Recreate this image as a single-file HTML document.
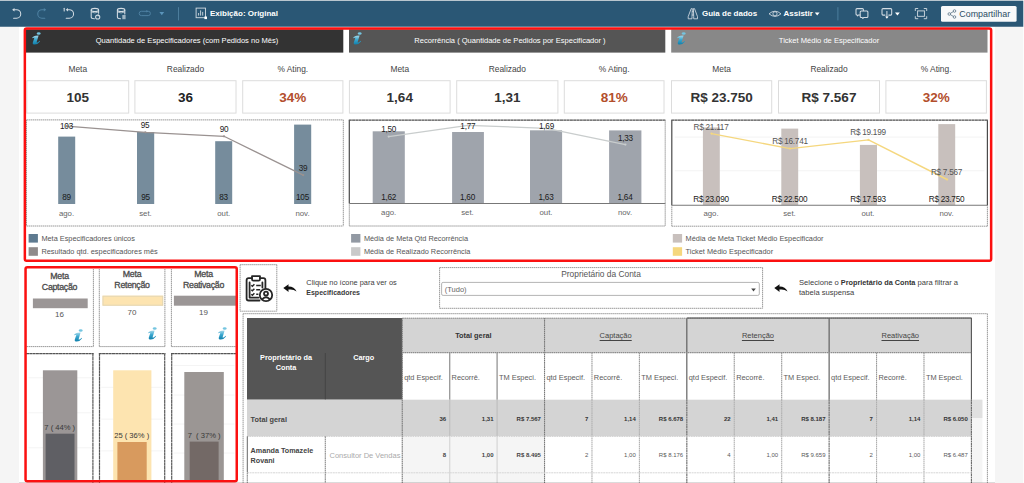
<!DOCTYPE html><html lang="pt-BR"><head><meta charset="utf-8"><title>Dashboard</title><style>
html,body{margin:0;padding:0;}
body{width:1024px;height:483px;overflow:hidden;background:#f5f5f5;position:relative;font-family:"Liberation Sans",sans-serif;}
div,svg{position:absolute;box-sizing:border-box;}
.t{position:absolute;z-index:5;}
</style></head><body>
<div style="left:19px;top:27px;width:976px;height:456px;background:#fff;"></div>
<svg style="left:0;top:0;z-index:4;" width="1024" height="28" viewBox="0 0 1024 28"><path d="M13.6 9.7 H16.5 A4.25 4.25 0 0 1 16.5 18.2 H13.6" stroke="#d3dce3" fill="none" stroke-width="1.05" stroke-linecap="round" stroke-linejoin="round"/><path d="M12.1 9.7 L14.5 8 V11.4 Z" fill="#d3dce3"/><path d="M44.4 9.7 H42 A4.25 4.25 0 0 0 42 18.2 H44.8" stroke="#4f82a3" fill="none" stroke-width="1.05" stroke-linecap="round" stroke-linejoin="round"/><path d="M46.2 9.7 L43.8 8 V11.4 Z" fill="#4f82a3"/><path d="M67.4 9.7 H69.3 A4.25 4.25 0 0 1 69.3 18.2 H66.2" stroke="#d3dce3" fill="none" stroke-width="1.05" stroke-linecap="round" stroke-linejoin="round"/><path d="M65.7 9.7 L68 8 V11.4 Z" fill="#d3dce3"/><path d="M64.2 8.3 V11" stroke="#d3dce3" fill="none" stroke-width="1.05" stroke-linecap="round" stroke-linejoin="round"/><path d="M91.2 10 V17 Q91.2 18.7 94.4 18.7 M98.6 10 V13.2" stroke="#d3dce3" fill="none" stroke-width="1.05" stroke-linecap="round" stroke-linejoin="round"/><ellipse cx="94.9" cy="9.9" rx="3.7" ry="1.5" stroke="#d3dce3" fill="none" stroke-width="1.05" stroke-linecap="round" stroke-linejoin="round"/><path d="M91.2 12 Q94.9 13.8 98.6 12" stroke="#d3dce3" fill="none" stroke-width="0.7"/><circle cx="97.7" cy="17" r="2.1" stroke="#d3dce3" fill="none" stroke-width="1.05" stroke-linecap="round" stroke-linejoin="round"/><circle cx="98.3" cy="15.4" r="0.9" fill="#d3dce3"/><path d="M117.4 10 V17 Q117.4 18.7 120.6 18.7 M124.8 10 V14" stroke="#d3dce3" fill="none" stroke-width="1.05" stroke-linecap="round" stroke-linejoin="round"/><ellipse cx="121.1" cy="9.9" rx="3.7" ry="1.5" stroke="#d3dce3" fill="none" stroke-width="1.05" stroke-linecap="round" stroke-linejoin="round"/><path d="M117.4 12 Q121.1 13.8 124.8 12" stroke="#d3dce3" fill="none" stroke-width="0.7"/><rect x="122.3" y="15" width="3.3" height="4.2" fill="#9db3c2"/><rect x="139.2" y="11.3" width="11.2" height="4.3" rx="2.15" stroke="#4f82a3" fill="none" stroke-width="0.95"/><path d="M146.3 10 L148.2 11.3 L146.3 12.6 Z" fill="#4f82a3"/><path d="M159.4 12 H164.2 L161.8 15.3 Z" fill="#5a94ba"/><path d="M178.5 7.2 V20.4 M837.9 7.2 V20.4" stroke="#4c7d9c" stroke-width="1"/><rect x="196.1" y="8.1" width="9.4" height="9.6" fill="none" stroke="#d3dce3" stroke-width="0.9"/><path d="M198.6 15.6 V13 M200.6 15.6 V10.4 M202.7 15.6 V11.9" stroke="#d3dce3" stroke-width="0.9"/><rect x="204.4" y="16.5" width="2.6" height="2.6" fill="#fff"/><path d="M691.2 8.6 L688.2 16.6 V18.8 H692 V16.6 L692.3 8.6 Z M694.5 8.6 L697.5 16.6 V18.8 H693.7 V16.6 L693.4 8.6 Z" stroke="#d3dce3" fill="none" stroke-width="0.85" stroke-linejoin="round"/><path d="M692.2 11.6 H693.6 M692 15 H693.7" stroke="#d3dce3" stroke-width="0.85"/><path d="M769 13.8 Q775 8.6 781 13.8 Q775 19 769 13.8 Z" stroke="#d3dce3" fill="none" stroke-width="0.85"/><circle cx="775" cy="13.8" r="2.1" stroke="#d3dce3" fill="none" stroke-width="0.85"/><path d="M814.8 12.4 H819.6 L817.2 15.6 Z" fill="#fff"/><path d="M860 14.9 H858.4 L857.6 15.9 L857 14.9 Q856 14.9 856 13.9 V9.6 Q856 8.6 857 8.6 H862.4 Q863.4 8.6 863.4 9.6 V10.6" stroke="#d3dce3" fill="none" stroke-width="1.05" stroke-linecap="round" stroke-linejoin="round"/><path d="M861.2 11 H866.9 Q867.9 11 867.9 12 V16.4 Q867.9 17.4 866.9 17.4 H863.8 L862.9 18.5 L862 17.4 H861.2 Q860.2 17.4 860.2 16.4 V12 Q860.2 11 861.2 11 Z" stroke="#d3dce3" fill="none" stroke-width="1.05" stroke-linecap="round" stroke-linejoin="round"/><path d="M885 15.1 H883 Q882 15.1 882 14.1 V9.6 Q882 8.6 883 8.6 H890.7 Q891.7 8.6 891.7 9.6 V14.1 Q891.7 15.1 890.7 15.1 H888.8" stroke="#d3dce3" fill="none" stroke-width="1.05" stroke-linecap="round" stroke-linejoin="round"/><path d="M886.9 11.6 V17" stroke="#d3dce3" fill="none" stroke-width="1.05" stroke-linecap="round" stroke-linejoin="round"/><path d="M885.2 16.4 H888.6 L886.9 18.8 Z" fill="#fff"/><path d="M895 12.4 H899.8 L897.4 15.6 Z" fill="#fff"/><rect x="917.6" y="10.9" width="6.8" height="5.4" stroke="#d3dce3" fill="none" stroke-width="0.9"/><path d="M915.3 11 V8.5 H918.2 M923.8 8.5 H926.7 V11 M926.7 16.2 V18.7 H923.8 M918.2 18.7 H915.3 V16.2" stroke="#d3dce3" fill="none" stroke-width="0.9"/><g stroke="#5a7386" stroke-width="0.8" fill="none"><circle cx="949.3" cy="14" r="1.3"/><circle cx="954.5" cy="11" r="1.3"/><circle cx="954.5" cy="17" r="1.3"/><path d="M950.4 13.3 L953.4 11.6 M950.4 14.7 L953.4 16.4"/></g></svg>
<div class="t" style="top:9.20px;font-size:8px;line-height:9.6px;color:#fff;font-weight:bold;white-space:nowrap;left:210px;text-align:left;">Exibição: Original</div>
<div class="t" style="top:9.20px;font-size:8px;line-height:9.6px;color:#fff;font-weight:bold;white-space:nowrap;left:702px;text-align:left;">Guia de dados</div>
<div class="t" style="top:9.20px;font-size:8px;line-height:9.6px;color:#fff;font-weight:bold;white-space:nowrap;left:783.5px;text-align:left;">Assistir</div>
<div class="t" style="top:8.66px;font-size:8.9px;line-height:10.68px;color:#2b4c63;font-weight:normal;white-space:nowrap;left:959.3px;text-align:left;">Compartilhar</div>
<svg style="left:32.4px;top:32.3px;z-index:4;" width="9.0" height="13.0" viewBox="0 0 9 13"><defs><linearGradient id="ig356" x1="0" y1="0" x2="0" y2="1"><stop offset="0" stop-color="#a3d8ea"/><stop offset="0.45" stop-color="#3aa7cf"/><stop offset="1" stop-color="#0f7fab"/></linearGradient></defs><ellipse cx="6.7" cy="1.6" rx="1.9" ry="1.25" fill="#74c5e0"/><path d="M3.6 3.7 L6.6 3.6 L4.7 9.9 Q4.5 10.8 5.3 10.6 Q6.6 10.1 7.8 8.8 L8 9.5 Q6 12.3 2.8 12.6 Q0.3 12.7 0.8 10.5 L2.4 5.8 L0.2 6.2 L0.3 5.4 Q2 4 3.6 3.7 Z" fill="url(#ig356)"/></svg>
<div class="t" style="top:35.77px;font-size:7.55px;line-height:9.06px;color:#fff;font-weight:normal;white-space:nowrap;left:-13px;width:400px;text-align:center;">Quantidade de Especificadores (com Pedidos no Mês)</div>
<svg style="left:353.2px;top:32.3px;z-index:4;" width="9.0" height="13.0" viewBox="0 0 9 13"><defs><linearGradient id="ig3564" x1="0" y1="0" x2="0" y2="1"><stop offset="0" stop-color="#a3d8ea"/><stop offset="0.45" stop-color="#3aa7cf"/><stop offset="1" stop-color="#0f7fab"/></linearGradient></defs><ellipse cx="6.7" cy="1.6" rx="1.9" ry="1.25" fill="#74c5e0"/><path d="M3.6 3.7 L6.6 3.6 L4.7 9.9 Q4.5 10.8 5.3 10.6 Q6.6 10.1 7.8 8.8 L8 9.5 Q6 12.3 2.8 12.6 Q0.3 12.7 0.8 10.5 L2.4 5.8 L0.2 6.2 L0.3 5.4 Q2 4 3.6 3.7 Z" fill="url(#ig3564)"/></svg>
<div class="t" style="top:35.77px;font-size:7.55px;line-height:9.06px;color:#fff;font-weight:normal;white-space:nowrap;left:310px;width:400px;text-align:center;">Recorrência ( Quantidade de Pedidos por Especificador )</div>
<svg style="left:677.2px;top:32.3px;z-index:4;" width="9.0" height="13.0" viewBox="0 0 9 13"><defs><linearGradient id="ig6804" x1="0" y1="0" x2="0" y2="1"><stop offset="0" stop-color="#a3d8ea"/><stop offset="0.45" stop-color="#3aa7cf"/><stop offset="1" stop-color="#0f7fab"/></linearGradient></defs><ellipse cx="6.7" cy="1.6" rx="1.9" ry="1.25" fill="#74c5e0"/><path d="M3.6 3.7 L6.6 3.6 L4.7 9.9 Q4.5 10.8 5.3 10.6 Q6.6 10.1 7.8 8.8 L8 9.5 Q6 12.3 2.8 12.6 Q0.3 12.7 0.8 10.5 L2.4 5.8 L0.2 6.2 L0.3 5.4 Q2 4 3.6 3.7 Z" fill="url(#ig6804)"/></svg>
<div class="t" style="top:35.77px;font-size:7.55px;line-height:9.06px;color:#fff;font-weight:normal;white-space:nowrap;left:629px;width:400px;text-align:center;">Ticket Médio de Especificador</div>
<div class="t" style="top:63.96px;font-size:8.4px;line-height:10.08px;color:#444;font-weight:normal;white-space:nowrap;left:-122.25px;width:400px;text-align:center;">Meta</div>
<div class="t" style="top:90.40px;font-size:13.5px;line-height:16.2px;color:#333;font-weight:bold;white-space:nowrap;left:-122.25px;width:400px;text-align:center;">105</div>
<div class="t" style="top:63.96px;font-size:8.4px;line-height:10.08px;color:#444;font-weight:normal;white-space:nowrap;left:-14.550000000000011px;width:400px;text-align:center;">Realizado</div>
<div class="t" style="top:90.40px;font-size:13.5px;line-height:16.2px;color:#222;font-weight:bold;white-space:nowrap;left:-14.550000000000011px;width:400px;text-align:center;">36</div>
<div class="t" style="top:63.96px;font-size:8.4px;line-height:10.08px;color:#444;font-weight:normal;white-space:nowrap;left:92.79999999999995px;width:400px;text-align:center;">% Ating.</div>
<div class="t" style="top:90.40px;font-size:13.5px;line-height:16.2px;color:#b34e2c;font-weight:bold;white-space:nowrap;left:92.79999999999995px;width:400px;text-align:center;">34%</div>
<div class="t" style="top:63.96px;font-size:8.4px;line-height:10.08px;color:#444;font-weight:normal;white-space:nowrap;left:199.75px;width:400px;text-align:center;">Meta</div>
<div class="t" style="top:90.40px;font-size:13.5px;line-height:16.2px;color:#333;font-weight:bold;white-space:nowrap;left:199.75px;width:400px;text-align:center;">1,64</div>
<div class="t" style="top:63.96px;font-size:8.4px;line-height:10.08px;color:#444;font-weight:normal;white-space:nowrap;left:307.29999999999995px;width:400px;text-align:center;">Realizado</div>
<div class="t" style="top:90.40px;font-size:13.5px;line-height:16.2px;color:#333;font-weight:bold;white-space:nowrap;left:307.29999999999995px;width:400px;text-align:center;">1,31</div>
<div class="t" style="top:63.96px;font-size:8.4px;line-height:10.08px;color:#444;font-weight:normal;white-space:nowrap;left:414.15px;width:400px;text-align:center;">% Ating.</div>
<div class="t" style="top:90.40px;font-size:13.5px;line-height:16.2px;color:#b34e2c;font-weight:bold;white-space:nowrap;left:414.15px;width:400px;text-align:center;">81%</div>
<div class="t" style="top:63.96px;font-size:8.4px;line-height:10.08px;color:#444;font-weight:normal;white-space:nowrap;left:521.6px;width:400px;text-align:center;">Meta</div>
<div class="t" style="top:90.40px;font-size:13.5px;line-height:16.2px;color:#333;font-weight:bold;white-space:nowrap;left:521.6px;width:400px;text-align:center;">R$ 23.750</div>
<div class="t" style="top:63.96px;font-size:8.4px;line-height:10.08px;color:#444;font-weight:normal;white-space:nowrap;left:629.0px;width:400px;text-align:center;">Realizado</div>
<div class="t" style="top:90.40px;font-size:13.5px;line-height:16.2px;color:#333;font-weight:bold;white-space:nowrap;left:629.0px;width:400px;text-align:center;">R$ 7.567</div>
<div class="t" style="top:63.96px;font-size:8.4px;line-height:10.08px;color:#444;font-weight:normal;white-space:nowrap;left:736.15px;width:400px;text-align:center;">% Ating.</div>
<div class="t" style="top:90.40px;font-size:13.5px;line-height:16.2px;color:#b34e2c;font-weight:bold;white-space:nowrap;left:736.15px;width:400px;text-align:center;">32%</div>
<div class="t" style="top:122.08px;font-size:8.2px;line-height:9.84px;color:#222;font-weight:normal;white-space:nowrap;letter-spacing:-0.25px;left:-133.5px;width:400px;text-align:center;">103</div>
<div class="t" style="top:121.48px;font-size:8.2px;line-height:9.84px;color:#222;font-weight:normal;white-space:nowrap;letter-spacing:-0.25px;left:-55px;width:400px;text-align:center;">95</div>
<div class="t" style="top:125.38px;font-size:8.2px;line-height:9.84px;color:#222;font-weight:normal;white-space:nowrap;letter-spacing:-0.25px;left:24px;width:400px;text-align:center;">90</div>
<div class="t" style="top:164.38px;font-size:8.2px;line-height:9.84px;color:#222;font-weight:normal;white-space:nowrap;letter-spacing:-0.25px;left:103px;width:400px;text-align:center;">39</div>
<div class="t" style="top:193.38px;font-size:8.2px;line-height:9.84px;color:#1a1a1a;font-weight:normal;white-space:nowrap;letter-spacing:-0.25px;left:-133.5px;width:400px;text-align:center;">89</div>
<div class="t" style="top:193.38px;font-size:8.2px;line-height:9.84px;color:#1a1a1a;font-weight:normal;white-space:nowrap;letter-spacing:-0.25px;left:-54.5px;width:400px;text-align:center;">95</div>
<div class="t" style="top:193.38px;font-size:8.2px;line-height:9.84px;color:#1a1a1a;font-weight:normal;white-space:nowrap;letter-spacing:-0.25px;left:23.5px;width:400px;text-align:center;">83</div>
<div class="t" style="top:193.38px;font-size:8.2px;line-height:9.84px;color:#1a1a1a;font-weight:normal;white-space:nowrap;letter-spacing:-0.25px;left:102.5px;width:400px;text-align:center;">105</div>
<div class="t" style="top:208.82px;font-size:7.8px;line-height:9.36px;color:#666;font-weight:normal;white-space:nowrap;left:-133.5px;width:400px;text-align:center;">ago.</div>
<div class="t" style="top:208.82px;font-size:7.8px;line-height:9.36px;color:#666;font-weight:normal;white-space:nowrap;left:-54.5px;width:400px;text-align:center;">set.</div>
<div class="t" style="top:208.82px;font-size:7.8px;line-height:9.36px;color:#666;font-weight:normal;white-space:nowrap;left:23.80000000000001px;width:400px;text-align:center;">out.</div>
<div class="t" style="top:208.82px;font-size:7.8px;line-height:9.36px;color:#666;font-weight:normal;white-space:nowrap;left:102.5px;width:400px;text-align:center;">nov.</div>
<div class="t" style="top:234.89px;font-size:7.35px;line-height:8.82px;color:#555;font-weight:normal;white-space:nowrap;left:41.400000000000006px;text-align:left;">Meta Especificadores únicos</div>
<div class="t" style="top:248.09px;font-size:7.35px;line-height:8.82px;color:#555;font-weight:normal;white-space:nowrap;left:41.400000000000006px;text-align:left;">Resultado qtd. especificadores mês</div>
<div class="t" style="top:125.38px;font-size:8.2px;line-height:9.84px;color:#222;font-weight:normal;white-space:nowrap;letter-spacing:-0.25px;left:188.7px;width:400px;text-align:center;">1,50</div>
<div class="t" style="top:121.68px;font-size:8.2px;line-height:9.84px;color:#222;font-weight:normal;white-space:nowrap;letter-spacing:-0.25px;left:267.8px;width:400px;text-align:center;">1,77</div>
<div class="t" style="top:121.98px;font-size:8.2px;line-height:9.84px;color:#222;font-weight:normal;white-space:nowrap;letter-spacing:-0.25px;left:346.5px;width:400px;text-align:center;">1,69</div>
<div class="t" style="top:133.68px;font-size:8.2px;line-height:9.84px;color:#222;font-weight:normal;white-space:nowrap;letter-spacing:-0.25px;left:425.4px;width:400px;text-align:center;">1,33</div>
<div class="t" style="top:192.98px;font-size:8.2px;line-height:9.84px;color:#1a1a1a;font-weight:normal;white-space:nowrap;letter-spacing:-0.25px;left:188.7px;width:400px;text-align:center;">1,62</div>
<div class="t" style="top:192.98px;font-size:8.2px;line-height:9.84px;color:#1a1a1a;font-weight:normal;white-space:nowrap;letter-spacing:-0.25px;left:267.5px;width:400px;text-align:center;">1,60</div>
<div class="t" style="top:192.98px;font-size:8.2px;line-height:9.84px;color:#1a1a1a;font-weight:normal;white-space:nowrap;letter-spacing:-0.25px;left:346px;width:400px;text-align:center;">1,63</div>
<div class="t" style="top:192.98px;font-size:8.2px;line-height:9.84px;color:#1a1a1a;font-weight:normal;white-space:nowrap;letter-spacing:-0.25px;left:425px;width:400px;text-align:center;">1,64</div>
<div class="t" style="top:207.62px;font-size:7.8px;line-height:9.36px;color:#666;font-weight:normal;white-space:nowrap;left:188.7px;width:400px;text-align:center;">ago.</div>
<div class="t" style="top:207.62px;font-size:7.8px;line-height:9.36px;color:#666;font-weight:normal;white-space:nowrap;left:267.5px;width:400px;text-align:center;">set.</div>
<div class="t" style="top:207.62px;font-size:7.8px;line-height:9.36px;color:#666;font-weight:normal;white-space:nowrap;left:346px;width:400px;text-align:center;">out.</div>
<div class="t" style="top:207.62px;font-size:7.8px;line-height:9.36px;color:#666;font-weight:normal;white-space:nowrap;left:425px;width:400px;text-align:center;">nov.</div>
<div class="t" style="top:234.89px;font-size:7.35px;line-height:8.82px;color:#555;font-weight:normal;white-space:nowrap;left:363.90000000000003px;text-align:left;">Média de Meta Qtd Recorrência</div>
<div class="t" style="top:248.09px;font-size:7.35px;line-height:8.82px;color:#555;font-weight:normal;white-space:nowrap;left:363.90000000000003px;text-align:left;">Média de Realizado Recorrência</div>
<div class="t" style="top:122.58px;font-size:8.2px;line-height:9.84px;color:#555;font-weight:normal;white-space:nowrap;letter-spacing:-0.25px;left:511px;width:400px;text-align:center;">R$ 21.117</div>
<div class="t" style="top:137.08px;font-size:8.2px;line-height:9.84px;color:#555;font-weight:normal;white-space:nowrap;letter-spacing:-0.25px;left:590px;width:400px;text-align:center;">R$ 16.741</div>
<div class="t" style="top:128.28px;font-size:8.2px;line-height:9.84px;color:#555;font-weight:normal;white-space:nowrap;letter-spacing:-0.25px;left:668px;width:400px;text-align:center;">R$ 19.199</div>
<div class="t" style="top:168.18px;font-size:8.2px;line-height:9.84px;color:#555;font-weight:normal;white-space:nowrap;letter-spacing:-0.25px;left:746.5px;width:400px;text-align:center;">R$ 7.567</div>
<div class="t" style="top:194.98px;font-size:8.2px;line-height:9.84px;color:#1a1a1a;font-weight:normal;white-space:nowrap;letter-spacing:-0.25px;left:511px;width:400px;text-align:center;">R$ 23.090</div>
<div class="t" style="top:194.98px;font-size:8.2px;line-height:9.84px;color:#1a1a1a;font-weight:normal;white-space:nowrap;letter-spacing:-0.25px;left:589.5px;width:400px;text-align:center;">R$ 22.500</div>
<div class="t" style="top:194.98px;font-size:8.2px;line-height:9.84px;color:#1a1a1a;font-weight:normal;white-space:nowrap;letter-spacing:-0.25px;left:668px;width:400px;text-align:center;">R$ 17.593</div>
<div class="t" style="top:194.98px;font-size:8.2px;line-height:9.84px;color:#1a1a1a;font-weight:normal;white-space:nowrap;letter-spacing:-0.25px;left:746.5px;width:400px;text-align:center;">R$ 23.750</div>
<div class="t" style="top:209.22px;font-size:7.8px;line-height:9.36px;color:#666;font-weight:normal;white-space:nowrap;left:511px;width:400px;text-align:center;">ago.</div>
<div class="t" style="top:209.22px;font-size:7.8px;line-height:9.36px;color:#666;font-weight:normal;white-space:nowrap;left:589.5px;width:400px;text-align:center;">set.</div>
<div class="t" style="top:209.22px;font-size:7.8px;line-height:9.36px;color:#666;font-weight:normal;white-space:nowrap;left:668px;width:400px;text-align:center;">out.</div>
<div class="t" style="top:209.22px;font-size:7.8px;line-height:9.36px;color:#666;font-weight:normal;white-space:nowrap;left:746.5px;width:400px;text-align:center;">nov.</div>
<div class="t" style="top:234.89px;font-size:7.35px;line-height:8.82px;color:#555;font-weight:normal;white-space:nowrap;left:685.5999999999999px;text-align:left;">Média de Meta Ticket Médio Especificador</div>
<div class="t" style="top:248.09px;font-size:7.35px;line-height:8.82px;color:#555;font-weight:normal;white-space:nowrap;left:685.5999999999999px;text-align:left;">Ticket Médio Especificador</div>
<div class="t" style="top:270.82px;font-size:8.8px;line-height:10.56px;color:#4a4a4a;font-weight:normal;white-space:nowrap;letter-spacing:-0.25px;left:-140.5px;width:400px;text-align:center;-webkit-text-stroke:0.3px #4a4a4a;">Meta</div>
<div class="t" style="top:282.42px;font-size:8.8px;line-height:10.56px;color:#4a4a4a;font-weight:normal;white-space:nowrap;letter-spacing:-0.3px;left:-140.5px;width:400px;text-align:center;-webkit-text-stroke:0.3px #4a4a4a;">Captação</div>
<div class="t" style="top:309.80px;font-size:8px;line-height:9.6px;color:#555;font-weight:normal;white-space:nowrap;left:-140.5px;width:400px;text-align:center;">16</div>
<svg style="left:74.2px;top:329.1px;z-index:4;" width="9.0" height="13.0" viewBox="0 0 9 13"><defs><linearGradient id="ig1071" x1="0" y1="0" x2="0" y2="1"><stop offset="0" stop-color="#a3d8ea"/><stop offset="0.45" stop-color="#3aa7cf"/><stop offset="1" stop-color="#0f7fab"/></linearGradient></defs><ellipse cx="6.7" cy="1.6" rx="1.9" ry="1.25" fill="#74c5e0"/><path d="M3.6 3.7 L6.6 3.6 L4.7 9.9 Q4.5 10.8 5.3 10.6 Q6.6 10.1 7.8 8.8 L8 9.5 Q6 12.3 2.8 12.6 Q0.3 12.7 0.8 10.5 L2.4 5.8 L0.2 6.2 L0.3 5.4 Q2 4 3.6 3.7 Z" fill="url(#ig1071)"/></svg>
<div class="t" style="top:268.62px;font-size:8.8px;line-height:10.56px;color:#4a4a4a;font-weight:normal;white-space:nowrap;letter-spacing:-0.25px;left:-68px;width:400px;text-align:center;-webkit-text-stroke:0.3px #4a4a4a;">Meta</div>
<div class="t" style="top:280.32px;font-size:8.8px;line-height:10.56px;color:#4a4a4a;font-weight:normal;white-space:nowrap;letter-spacing:-0.3px;left:-68px;width:400px;text-align:center;-webkit-text-stroke:0.3px #4a4a4a;">Retenção</div>
<div class="t" style="top:307.60px;font-size:8px;line-height:9.6px;color:#555;font-weight:normal;white-space:nowrap;left:-68px;width:400px;text-align:center;">70</div>
<svg style="left:148px;top:327.2px;z-index:4;" width="9.0" height="13.0" viewBox="0 0 9 13"><defs><linearGradient id="ig1807" x1="0" y1="0" x2="0" y2="1"><stop offset="0" stop-color="#a3d8ea"/><stop offset="0.45" stop-color="#3aa7cf"/><stop offset="1" stop-color="#0f7fab"/></linearGradient></defs><ellipse cx="6.7" cy="1.6" rx="1.9" ry="1.25" fill="#74c5e0"/><path d="M3.6 3.7 L6.6 3.6 L4.7 9.9 Q4.5 10.8 5.3 10.6 Q6.6 10.1 7.8 8.8 L8 9.5 Q6 12.3 2.8 12.6 Q0.3 12.7 0.8 10.5 L2.4 5.8 L0.2 6.2 L0.3 5.4 Q2 4 3.6 3.7 Z" fill="url(#ig1807)"/></svg>
<div class="t" style="top:268.62px;font-size:8.8px;line-height:10.56px;color:#4a4a4a;font-weight:normal;white-space:nowrap;letter-spacing:-0.25px;left:3.5px;width:400px;text-align:center;-webkit-text-stroke:0.3px #4a4a4a;">Meta</div>
<div class="t" style="top:280.32px;font-size:8.8px;line-height:10.56px;color:#4a4a4a;font-weight:normal;white-space:nowrap;letter-spacing:-0.3px;left:3.5px;width:400px;text-align:center;-webkit-text-stroke:0.3px #4a4a4a;">Reativação</div>
<div class="t" style="top:307.60px;font-size:8px;line-height:9.6px;color:#555;font-weight:normal;white-space:nowrap;left:3.5px;width:400px;text-align:center;">19</div>
<svg style="left:218.2px;top:327.2px;z-index:4;" width="9.0" height="13.0" viewBox="0 0 9 13"><defs><linearGradient id="ig2509" x1="0" y1="0" x2="0" y2="1"><stop offset="0" stop-color="#a3d8ea"/><stop offset="0.45" stop-color="#3aa7cf"/><stop offset="1" stop-color="#0f7fab"/></linearGradient></defs><ellipse cx="6.7" cy="1.6" rx="1.9" ry="1.25" fill="#74c5e0"/><path d="M3.6 3.7 L6.6 3.6 L4.7 9.9 Q4.5 10.8 5.3 10.6 Q6.6 10.1 7.8 8.8 L8 9.5 Q6 12.3 2.8 12.6 Q0.3 12.7 0.8 10.5 L2.4 5.8 L0.2 6.2 L0.3 5.4 Q2 4 3.6 3.7 Z" fill="url(#ig2509)"/></svg>
<div class="t" style="top:422.64px;font-size:7.6px;line-height:9.12px;color:#383838;font-weight:normal;white-space:nowrap;left:-140.3px;width:400px;text-align:center;">7 ( 44% )</div>
<div class="t" style="top:431.24px;font-size:7.6px;line-height:9.12px;color:#383838;font-weight:normal;white-space:nowrap;left:-68.30000000000001px;width:400px;text-align:center;">25 ( 36% )</div>
<div class="t" style="top:430.64px;font-size:7.6px;line-height:9.12px;color:#383838;font-weight:normal;white-space:nowrap;left:4.099999999999994px;width:400px;text-align:center;">7&nbsp; ( 37% )</div>
<svg style="left:245px;top:274px;z-index:4;" width="28.5" height="28.5" viewBox="0 0 28.5 28.5">
<g fill="none" stroke="#262626" stroke-width="1.8" stroke-linejoin="round" stroke-linecap="round">
<path d="M7 4.2 H3.6 Q1.6 4.2 1.6 6.2 V24.5 Q1.6 26.5 3.6 26.5 H14.5"/>
<path d="M15 4.2 H18.4 Q20.4 4.2 20.4 6.2 V14"/>
<path d="M7 2.2 H15 V5.2 Q15 6.6 13.6 6.6 H8.4 Q7 6.6 7 5.2 Z"/>
<path d="M4.6 8.5 V23.6 H13.5 M17.4 8.5 V13.5"/>
<circle cx="21" cy="21" r="6.2"/>
<circle cx="21" cy="19.6" r="2"/>
<path d="M17.6 25 Q21 21.6 24.4 25"/>
</g>
<g stroke="#262626" stroke-width="1.5" fill="none">
<path d="M6.3 11.2 L7.4 12.3 L9.4 10.2 M6.3 15.7 L7.4 16.8 L9.4 14.7 M6.3 20.2 L7.4 21.3 L9.4 19.2"/>
<path d="M11.2 11.4 H15.8 M11.2 15.8 H15.2 M11.2 20.3 H13.4"/>
</g></svg>
<svg style="left:283.3px;top:284px;z-index:4;" width="14" height="9" viewBox="0 0 14 9"><path d="M0.3 4 L5.6 0.3 L5.4 2.6 Q11 2.4 13.6 7.4 Q10 4.8 5.4 5.6 L5.6 7.9 Z" fill="#111"/></svg>
<svg style="left:773.8px;top:284px;z-index:4;" width="14" height="9" viewBox="0 0 14 9"><path d="M0.3 4 L5.6 0.3 L5.4 2.6 Q11 2.4 13.6 7.4 Q10 4.8 5.4 5.6 L5.6 7.9 Z" fill="#111"/></svg>
<div class="t" style="left:306.3px;top:277.8px;font-size:7.4px;line-height:10.5px;color:#3c3c3c;white-space:nowrap;">Clique no ícone para ver os<br><b style="color:#3a3a3a;font-size:7px;">Especificadores</b></div>
<div class="t" style="left:799px;top:277.8px;font-size:7.6px;line-height:10.5px;color:#3c3c3c;white-space:nowrap;">Selecione o <b style="color:#333;font-size:7.3px;">Proprietário da Conta</b> para filtrar a<br>tabela suspensa</div>
<div class="t" style="top:269.26px;font-size:8.4px;line-height:10.08px;color:#555;font-weight:normal;white-space:nowrap;left:401px;width:400px;text-align:center;">Proprietário da Conta</div>
<div class="t" style="top:285.10px;font-size:7.5px;line-height:9.0px;color:#666;font-weight:normal;white-space:nowrap;left:444.8px;text-align:left;">(Tudo)</div>
<svg style="left:750.5px;top:287.7px;z-index:4;z-index:5;" width="5" height="4" viewBox="0 0 5 4"><path d="M0.2 0.4 H4.8 L2.5 3.6 Z" fill="#444"/></svg>
<div class="t" style="top:354.12px;font-size:7.3px;line-height:8.76px;color:#fff;font-weight:bold;white-space:nowrap;left:86px;width:400px;text-align:center;">Proprietário da</div>
<div class="t" style="top:364.12px;font-size:7.3px;line-height:8.76px;color:#fff;font-weight:bold;white-space:nowrap;left:86px;width:400px;text-align:center;">Conta</div>
<div class="t" style="top:354.12px;font-size:7.3px;line-height:8.76px;color:#fff;font-weight:bold;white-space:nowrap;left:163.7px;width:400px;text-align:center;">Cargo</div>
<div class="t" style="top:331.62px;font-size:7.3px;line-height:8.76px;color:#333;font-weight:bold;white-space:nowrap;left:273.395px;width:400px;text-align:center;">Total geral</div>
<div class="t" style="top:331.10px;font-size:7.5px;line-height:9.0px;color:#444;font-weight:normal;white-space:nowrap;left:415.68499999999995px;width:400px;text-align:center;text-decoration:underline;text-decoration-skip-ink:none;text-underline-offset:1.6px;text-decoration-thickness:0.8px;">Captação</div>
<div class="t" style="top:331.10px;font-size:7.5px;line-height:9.0px;color:#444;font-weight:normal;white-space:nowrap;left:557.9749999999999px;width:400px;text-align:center;text-decoration:underline;text-decoration-skip-ink:none;text-underline-offset:1.6px;text-decoration-thickness:0.8px;">Retenção</div>
<div class="t" style="top:331.10px;font-size:7.5px;line-height:9.0px;color:#444;font-weight:normal;white-space:nowrap;left:700.265px;width:400px;text-align:center;text-decoration:underline;text-decoration-skip-ink:none;text-underline-offset:1.6px;text-decoration-thickness:0.8px;">Reativação</div>
<div class="t" style="top:373.56px;font-size:7.4px;line-height:8.88px;color:#5c5c5c;font-weight:normal;white-space:nowrap;left:404.15px;text-align:left;">qtd Especif.</div>
<div class="t" style="top:373.56px;font-size:7.4px;line-height:8.88px;color:#5c5c5c;font-weight:normal;white-space:nowrap;left:451.58px;text-align:left;">Recorrê.</div>
<div class="t" style="top:373.56px;font-size:7.4px;line-height:8.88px;color:#5c5c5c;font-weight:normal;white-space:nowrap;left:499.01px;text-align:left;">TM Especi.</div>
<div class="t" style="top:373.56px;font-size:7.4px;line-height:8.88px;color:#5c5c5c;font-weight:normal;white-space:nowrap;left:546.4399999999999px;text-align:left;">qtd Especif.</div>
<div class="t" style="top:373.56px;font-size:7.4px;line-height:8.88px;color:#5c5c5c;font-weight:normal;white-space:nowrap;left:593.87px;text-align:left;">Recorrê.</div>
<div class="t" style="top:373.56px;font-size:7.4px;line-height:8.88px;color:#5c5c5c;font-weight:normal;white-space:nowrap;left:641.3px;text-align:left;">TM Especi.</div>
<div class="t" style="top:373.56px;font-size:7.4px;line-height:8.88px;color:#5c5c5c;font-weight:normal;white-space:nowrap;left:688.7299999999999px;text-align:left;">qtd Especif.</div>
<div class="t" style="top:373.56px;font-size:7.4px;line-height:8.88px;color:#5c5c5c;font-weight:normal;white-space:nowrap;left:736.16px;text-align:left;">Recorrê.</div>
<div class="t" style="top:373.56px;font-size:7.4px;line-height:8.88px;color:#5c5c5c;font-weight:normal;white-space:nowrap;left:783.59px;text-align:left;">TM Especi.</div>
<div class="t" style="top:373.56px;font-size:7.4px;line-height:8.88px;color:#5c5c5c;font-weight:normal;white-space:nowrap;left:831.02px;text-align:left;">qtd Especif.</div>
<div class="t" style="top:373.56px;font-size:7.4px;line-height:8.88px;color:#5c5c5c;font-weight:normal;white-space:nowrap;left:878.4499999999999px;text-align:left;">Recorrê.</div>
<div class="t" style="top:373.56px;font-size:7.4px;line-height:8.88px;color:#5c5c5c;font-weight:normal;white-space:nowrap;left:925.88px;text-align:left;">TM Especi.</div>
<div class="t" style="top:415.82px;font-size:7.3px;line-height:8.76px;color:#444;font-weight:bold;white-space:nowrap;left:250.6px;text-align:left;">Total geral</div>
<div class="t" style="top:446.98px;font-size:7.2px;line-height:8.64px;color:#444;font-weight:bold;white-space:nowrap;left:250.6px;text-align:left;">Amanda Tomazele</div>
<div class="t" style="top:456.78px;font-size:7.2px;line-height:8.64px;color:#444;font-weight:bold;white-space:nowrap;left:250.6px;text-align:left;">Rovani</div>
<div class="t" style="top:451.00px;font-size:7.5px;line-height:9.0px;color:#aaa;font-weight:normal;white-space:nowrap;left:329.5px;text-align:left;">Consultor De Vendas</div>
<div class="t" style="top:415.60px;font-size:6px;line-height:7.2px;color:#333;font-weight:bold;white-space:nowrap;left:46.079999999999984px;width:400px;text-align:right;">36</div>
<div class="t" style="top:451.60px;font-size:6px;line-height:7.2px;color:#444;font-weight:bold;white-space:nowrap;left:46.079999999999984px;width:400px;text-align:right;">8</div>
<div class="t" style="top:415.60px;font-size:6px;line-height:7.2px;color:#333;font-weight:bold;white-space:nowrap;left:93.50999999999999px;width:400px;text-align:right;">1,31</div>
<div class="t" style="top:451.60px;font-size:6px;line-height:7.2px;color:#444;font-weight:bold;white-space:nowrap;left:93.50999999999999px;width:400px;text-align:right;">1,00</div>
<div class="t" style="top:415.60px;font-size:6px;line-height:7.2px;color:#333;font-weight:bold;white-space:nowrap;left:140.93999999999994px;width:400px;text-align:right;">R$ 7.567</div>
<div class="t" style="top:451.60px;font-size:6px;line-height:7.2px;color:#444;font-weight:bold;white-space:nowrap;left:140.93999999999994px;width:400px;text-align:right;">R$ 8.495</div>
<div class="t" style="top:415.60px;font-size:6px;line-height:7.2px;color:#333;font-weight:bold;white-space:nowrap;left:188.37px;width:400px;text-align:right;">7</div>
<div class="t" style="top:451.60px;font-size:6px;line-height:7.2px;color:#5a5a5a;font-weight:normal;white-space:nowrap;left:188.37px;width:400px;text-align:right;">2</div>
<div class="t" style="top:415.60px;font-size:6px;line-height:7.2px;color:#333;font-weight:bold;white-space:nowrap;left:235.79999999999995px;width:400px;text-align:right;">1,14</div>
<div class="t" style="top:451.60px;font-size:6px;line-height:7.2px;color:#5a5a5a;font-weight:normal;white-space:nowrap;left:235.79999999999995px;width:400px;text-align:right;">1,00</div>
<div class="t" style="top:415.60px;font-size:6px;line-height:7.2px;color:#333;font-weight:bold;white-space:nowrap;left:283.2299999999999px;width:400px;text-align:right;">R$ 6.678</div>
<div class="t" style="top:451.60px;font-size:6px;line-height:7.2px;color:#5a5a5a;font-weight:normal;white-space:nowrap;left:283.2299999999999px;width:400px;text-align:right;">R$ 8.176</div>
<div class="t" style="top:415.60px;font-size:6px;line-height:7.2px;color:#333;font-weight:bold;white-space:nowrap;left:330.65999999999997px;width:400px;text-align:right;">22</div>
<div class="t" style="top:451.60px;font-size:6px;line-height:7.2px;color:#5a5a5a;font-weight:normal;white-space:nowrap;left:330.65999999999997px;width:400px;text-align:right;">4</div>
<div class="t" style="top:415.60px;font-size:6px;line-height:7.2px;color:#333;font-weight:bold;white-space:nowrap;left:378.09000000000003px;width:400px;text-align:right;">1,41</div>
<div class="t" style="top:451.60px;font-size:6px;line-height:7.2px;color:#5a5a5a;font-weight:normal;white-space:nowrap;left:378.09000000000003px;width:400px;text-align:right;">1,00</div>
<div class="t" style="top:415.60px;font-size:6px;line-height:7.2px;color:#333;font-weight:bold;white-space:nowrap;left:425.52px;width:400px;text-align:right;">R$ 8.187</div>
<div class="t" style="top:451.60px;font-size:6px;line-height:7.2px;color:#5a5a5a;font-weight:normal;white-space:nowrap;left:425.52px;width:400px;text-align:right;">R$ 9.659</div>
<div class="t" style="top:415.60px;font-size:6px;line-height:7.2px;color:#333;font-weight:bold;white-space:nowrap;left:472.94999999999993px;width:400px;text-align:right;">7</div>
<div class="t" style="top:451.60px;font-size:6px;line-height:7.2px;color:#5a5a5a;font-weight:normal;white-space:nowrap;left:472.94999999999993px;width:400px;text-align:right;">2</div>
<div class="t" style="top:415.60px;font-size:6px;line-height:7.2px;color:#333;font-weight:bold;white-space:nowrap;left:520.38px;width:400px;text-align:right;">1,14</div>
<div class="t" style="top:451.60px;font-size:6px;line-height:7.2px;color:#5a5a5a;font-weight:normal;white-space:nowrap;left:520.38px;width:400px;text-align:right;">1,00</div>
<div class="t" style="top:415.60px;font-size:6px;line-height:7.2px;color:#333;font-weight:bold;white-space:nowrap;left:567.81px;width:400px;text-align:right;">R$ 6.050</div>
<div class="t" style="top:451.60px;font-size:6px;line-height:7.2px;color:#5a5a5a;font-weight:normal;white-space:nowrap;left:567.81px;width:400px;text-align:right;">R$ 6.487</div>
<svg style="left:0;top:0;pointer-events:none;z-index:6;" width="1024" height="483" viewBox="0 0 1024 483"><rect x="24.85" y="28.55" width="966.30" height="232.30" rx="1.8" fill="none" stroke="#fb1010" stroke-width="2.5"/></svg>
<svg style="left:0;top:0;pointer-events:none;z-index:6;" width="1024" height="483" viewBox="0 0 1024 483"><rect x="25.55" y="267.25" width="211.20" height="214.00" rx="1.8" fill="none" stroke="#fb1010" stroke-width="2.5"/></svg>
<svg style="left:0;top:0;pointer-events:none;z-index:3;" width="1024" height="483" viewBox="0 0 1024 483"><rect x="0" y="0" width="1024" height="26.75" fill="#2a5775"/><rect x="0" y="0" width="1024" height="1" fill="#b9c6ce"/><rect x="1023" y="0" width="1" height="483" fill="#fff" fill-opacity="0.7"/><rect x="941" y="5.9" width="75.6" height="15.9" rx="1.5" fill="#f8f9fa"/><rect x="26" y="29.3" width="317.3" height="23.3" fill="#333333"/><rect x="349" y="29.3" width="316.3" height="23.3" fill="#555555"/><rect x="671.2" y="29.3" width="316.3" height="23.3" fill="#888888"/><rect x="26.80" y="80.7" width="101.90" height="32.4" fill="#fff" stroke="#dcdcdc" stroke-width="1"/><rect x="134.90" y="80.7" width="101.10" height="32.4" fill="#fff" stroke="#dcdcdc" stroke-width="1"/><rect x="242.70" y="80.7" width="100.20" height="32.4" fill="#fff" stroke="#dcdcdc" stroke-width="1"/><rect x="349.40" y="80.7" width="100.70" height="32.4" fill="#fff" stroke="#dcdcdc" stroke-width="1"/><rect x="456.70" y="80.7" width="101.20" height="32.4" fill="#fff" stroke="#dcdcdc" stroke-width="1"/><rect x="564.30" y="80.7" width="99.70" height="32.4" fill="#fff" stroke="#dcdcdc" stroke-width="1"/><rect x="671.50" y="80.7" width="100.20" height="32.4" fill="#fff" stroke="#dcdcdc" stroke-width="1"/><rect x="778.50" y="80.7" width="101.00" height="32.4" fill="#fff" stroke="#dcdcdc" stroke-width="1"/><rect x="885.90" y="80.7" width="100.50" height="32.4" fill="#fff" stroke="#dcdcdc" stroke-width="1"/><rect x="58.2" y="136.6" width="17.0" height="67.4" fill="#768c9c"/><rect x="137" y="132" width="17.2" height="72" fill="#768c9c"/><rect x="215.2" y="141.2" width="17.0" height="62.8" fill="#768c9c"/><rect x="294.1" y="124.6" width="17.1" height="79.4" fill="#768c9c"/><line x1="26.5" y1="119.9" x2="343.3" y2="119.9" stroke="#9a9a9a" stroke-width="1" stroke-dasharray="1.5 0.5"/><line x1="26.5" y1="226" x2="343.3" y2="226" stroke="#9a9a9a" stroke-width="1" stroke-dasharray="1.5 0.5"/><line x1="26.5" y1="119.9" x2="26.5" y2="226" stroke="#9a9a9a" stroke-width="1" stroke-dasharray="1.5 0.5"/><line x1="343.3" y1="119.9" x2="343.3" y2="226" stroke="#9a9a9a" stroke-width="1" stroke-dasharray="1.5 0.5"/><polyline points="66.5,126.2 145.4,132.3 224.0,136.3 303.2,175.1" fill="none" stroke="#9a9291" stroke-width="1.2" stroke-linejoin="round"/><circle cx="66.5" cy="126.2" r="1.1" fill="#9a9291"/><circle cx="145.4" cy="132.3" r="1.1" fill="#9a9291"/><circle cx="224.0" cy="136.3" r="1.1" fill="#9a9291"/><circle cx="303.2" cy="175.1" r="1.1" fill="#9a9291"/><rect x="28.6" y="234" width="9.3" height="8.6" fill="#5e7a90"/><rect x="28.6" y="247.2" width="9.3" height="8.6" fill="#8f8a8a"/><rect x="372.7" y="131.3" width="32.1" height="71.9" fill="#9fa4ac"/><rect x="452.1" y="132" width="31.8" height="71.2" fill="#9fa4ac"/><rect x="530" y="130.3" width="32.1" height="72.9" fill="#9fa4ac"/><rect x="609.1" y="130.4" width="32.3" height="72.8" fill="#9fa4ac"/><line x1="349.3" y1="226" x2="665.2" y2="226" stroke="#9a9a9a" stroke-width="1" stroke-dasharray="1.5 0.5"/><line x1="349.3" y1="203.2" x2="349.3" y2="226" stroke="#9a9a9a" stroke-width="1" stroke-dasharray="1.5 0.5"/><line x1="665.2" y1="203.2" x2="665.2" y2="226" stroke="#9a9a9a" stroke-width="1" stroke-dasharray="1.5 0.5"/><line x1="348.8" y1="120.2" x2="665.7" y2="120.2" stroke="#4f4f4f" stroke-width="1.2" stroke-dasharray="3 0.3"/><line x1="349.3" y1="120.2" x2="349.3" y2="203.2" stroke="#4a4a4a" stroke-width="1.2"/><line x1="349.3" y1="203.5" x2="665.2" y2="203.5" stroke="#777" stroke-width="1.1"/><line x1="665.2" y1="120.2" x2="665.2" y2="203.2" stroke="#9a9a9a" stroke-width="1" stroke-dasharray="1.5 0.5"/><polyline points="388.7,136.6 467.9,125.3 546.5,128.3 625.4,144.6" fill="none" stroke="#c9cdcd" stroke-width="1.2" stroke-linejoin="round"/><circle cx="388.7" cy="136.6" r="1.1" fill="#c9cdcd"/><circle cx="467.9" cy="125.3" r="1.1" fill="#c9cdcd"/><circle cx="546.5" cy="128.3" r="1.1" fill="#c9cdcd"/><circle cx="625.4" cy="144.6" r="1.1" fill="#c9cdcd"/><rect x="351.1" y="234" width="9.3" height="8.6" fill="#9299a3"/><rect x="351.1" y="247.2" width="9.3" height="8.6" fill="#c9c9c9"/><line x1="674.8" y1="137.1" x2="984.4" y2="137.1" stroke="#f3f3f3" stroke-width="1"/><line x1="674.8" y1="170.8" x2="984.4" y2="170.8" stroke="#f3f3f3" stroke-width="1"/><rect x="702.9" y="127.5" width="16.9" height="77.5" fill="#c8c0bd"/><rect x="781.3" y="128.6" width="16.9" height="76.4" fill="#c8c0bd"/><rect x="859.9" y="144.9" width="17.1" height="60.1" fill="#c8c0bd"/><rect x="938.3" y="124.1" width="16.9" height="80.9" fill="#c8c0bd"/><line x1="671.8" y1="226.2" x2="987.4" y2="226.2" stroke="#9a9a9a" stroke-width="1" stroke-dasharray="1.5 0.5"/><line x1="671.8" y1="205" x2="671.8" y2="226.2" stroke="#9a9a9a" stroke-width="1" stroke-dasharray="1.5 0.5"/><line x1="987.4" y1="205" x2="987.4" y2="226.2" stroke="#9a9a9a" stroke-width="1" stroke-dasharray="1.5 0.5"/><line x1="671.3" y1="120.2" x2="987.9" y2="120.2" stroke="#4f4f4f" stroke-width="1.2" stroke-dasharray="3 0.3"/><line x1="671.8" y1="120.2" x2="671.8" y2="205" stroke="#4a4a4a" stroke-width="1.2"/><line x1="671.8" y1="205.3" x2="987.4" y2="205.3" stroke="#777" stroke-width="1.1"/><line x1="987.4" y1="120.2" x2="987.4" y2="205" stroke="#4a4a4a" stroke-width="1.2"/><polyline points="711.5,133.6 790.0,148.6 868.5,139.9 947.1,179.5" fill="none" stroke="#f5d77e" stroke-width="1.4" stroke-linejoin="round"/><circle cx="711.5" cy="133.6" r="1.1" fill="#f5d77e"/><circle cx="790.0" cy="148.6" r="1.1" fill="#f5d77e"/><circle cx="868.5" cy="139.9" r="1.1" fill="#f5d77e"/><circle cx="947.1" cy="179.5" r="1.1" fill="#f5d77e"/><rect x="672.8" y="234" width="9.3" height="8.6" fill="#c8c0bd"/><rect x="672.8" y="247.2" width="9.3" height="8.6" fill="#f5d77e"/><line x1="26.5" y1="346.6" x2="93.4" y2="346.6" stroke="#9a9a9a" stroke-width="1" stroke-dasharray="1.5 0.5"/><line x1="93.4" y1="269" x2="93.4" y2="346.6" stroke="#9a9a9a" stroke-width="1" stroke-dasharray="1.5 0.5"/><rect x="32.9" y="298.5" width="54.8" height="9.7" fill="#9b9696"/><line x1="99.3" y1="346.6" x2="164.9" y2="346.6" stroke="#9a9a9a" stroke-width="1" stroke-dasharray="1.5 0.5"/><line x1="99.3" y1="269" x2="99.3" y2="346.6" stroke="#9a9a9a" stroke-width="1" stroke-dasharray="1.5 0.5"/><line x1="164.9" y1="269" x2="164.9" y2="346.6" stroke="#9a9a9a" stroke-width="1" stroke-dasharray="1.5 0.5"/><rect x="102.5" y="295.7" width="60.7" height="10.0" fill="#fde4b0"/><rect x="103.0" y="296.2" width="59.69999999999999" height="9.0" fill="none" stroke="#e3d6b4" stroke-width="1"/><line x1="171.4" y1="346.6" x2="236.5" y2="346.6" stroke="#9a9a9a" stroke-width="1" stroke-dasharray="1.5 0.5"/><line x1="171.4" y1="269" x2="171.4" y2="346.6" stroke="#9a9a9a" stroke-width="1" stroke-dasharray="1.5 0.5"/><rect x="173.9" y="295.7" width="62.1" height="10.0" fill="#9b9696"/><line x1="28.5" y1="377.8" x2="91.2" y2="377.8" stroke="#f4f4f4" stroke-width="1"/><line x1="28.5" y1="412.8" x2="91.2" y2="412.8" stroke="#f4f4f4" stroke-width="1"/><line x1="28.5" y1="447.8" x2="91.2" y2="447.8" stroke="#f4f4f4" stroke-width="1"/><rect x="42.9" y="370.3" width="34.4" height="110.7" fill="#9b9696"/><rect x="45.6" y="433.7" width="28.9" height="47.3" fill="#5f5f64"/><line x1="26.0" y1="353.7" x2="93.7" y2="353.7" stroke="#555" stroke-width="1.2" stroke-dasharray="3 0.3"/><line x1="92.9" y1="353.8" x2="92.9" y2="483" stroke="#5a5a5a" stroke-width="1.2" stroke-dasharray="3 0.3"/><line x1="101.3" y1="387.3" x2="163" y2="387.3" stroke="#f4f4f4" stroke-width="1"/><line x1="101.3" y1="419.1" x2="163" y2="419.1" stroke="#f4f4f4" stroke-width="1"/><line x1="101.3" y1="450.9" x2="163" y2="450.9" stroke="#f4f4f4" stroke-width="1"/><rect x="113.2" y="370.3" width="38.2" height="110.7" fill="#fde4b0"/><rect x="117.4" y="442" width="29.3" height="39" fill="#d89a5e"/><line x1="98.8" y1="353.7" x2="165.5" y2="353.7" stroke="#555" stroke-width="1.2" stroke-dasharray="3 0.3"/><line x1="99.5" y1="353.8" x2="99.5" y2="483" stroke="#5a5a5a" stroke-width="1.2" stroke-dasharray="3 0.3"/><line x1="164.7" y1="353.8" x2="164.7" y2="483" stroke="#5a5a5a" stroke-width="1.2" stroke-dasharray="3 0.3"/><line x1="173.5" y1="365.5" x2="234.5" y2="365.5" stroke="#f4f4f4" stroke-width="1"/><line x1="173.5" y1="395" x2="234.5" y2="395" stroke="#f4f4f4" stroke-width="1"/><line x1="173.5" y1="424" x2="234.5" y2="424" stroke="#f4f4f4" stroke-width="1"/><line x1="173.5" y1="453" x2="234.5" y2="453" stroke="#f4f4f4" stroke-width="1"/><rect x="184.3" y="372" width="39.5" height="109" fill="#9b9694"/><rect x="189.7" y="441.6" width="28.9" height="39.4" fill="#736966"/><line x1="171.0" y1="353.7" x2="237.0" y2="353.7" stroke="#555" stroke-width="1.2" stroke-dasharray="3 0.3"/><line x1="171.7" y1="353.8" x2="171.7" y2="483" stroke="#5a5a5a" stroke-width="1.2" stroke-dasharray="3 0.3"/><line x1="240.1" y1="264.7" x2="276.8" y2="264.7" stroke="#9a9a9a" stroke-width="1" stroke-dasharray="1.5 0.5"/><line x1="240.1" y1="311.2" x2="276.8" y2="311.2" stroke="#9a9a9a" stroke-width="1" stroke-dasharray="1.5 0.5"/><line x1="240.1" y1="264.7" x2="240.1" y2="311.2" stroke="#9a9a9a" stroke-width="1" stroke-dasharray="1.5 0.5"/><line x1="276.8" y1="264.7" x2="276.8" y2="311.2" stroke="#9a9a9a" stroke-width="1" stroke-dasharray="1.5 0.5"/><line x1="439.6" y1="267.6" x2="762.6" y2="267.6" stroke="#9a9a9a" stroke-width="1" stroke-dasharray="1.5 0.5"/><line x1="439.6" y1="308.3" x2="762.6" y2="308.3" stroke="#9a9a9a" stroke-width="1" stroke-dasharray="1.5 0.5"/><line x1="439.6" y1="267.6" x2="439.6" y2="308.3" stroke="#9a9a9a" stroke-width="1" stroke-dasharray="1.5 0.5"/><line x1="762.6" y1="267.6" x2="762.6" y2="308.3" stroke="#9a9a9a" stroke-width="1" stroke-dasharray="1.5 0.5"/><rect x="441.6" y="282.4" width="317.7" height="13" rx="1.5" fill="#fff" stroke="#b4b4b4" stroke-width="1"/><line x1="243.1" y1="313.7" x2="987.4" y2="313.7" stroke="#9a9a9a" stroke-width="1" stroke-dasharray="1.5 0.5"/><line x1="243.1" y1="313.7" x2="243.1" y2="483" stroke="#9a9a9a" stroke-width="1" stroke-dasharray="1.5 0.5"/><line x1="987.4" y1="313.7" x2="987.4" y2="483" stroke="#9a9a9a" stroke-width="1" stroke-dasharray="1.5 0.5"/><rect x="247" y="318" width="155.25" height="81.7" fill="#555555"/><line x1="325.3" y1="353" x2="325.3" y2="399.7" stroke="#444" stroke-width="1"/><rect x="402.25" y="318" width="569.25" height="34.5" fill="#d4d4d4"/><rect x="247" y="399.7" width="724.5" height="36.6" fill="#d4d4d4"/><rect x="402.25" y="436.3" width="142.25" height="46.7" fill="#f5f5f5"/><rect x="971.8" y="399.7" width="10.6" height="83.3" fill="#f5f5f5"/><rect x="971.8" y="399.7" width="10.6" height="18.3" fill="#e0e0e0"/><line x1="402.25" y1="318" x2="402.25" y2="483" stroke="#7a7a7a" stroke-width="1.1" stroke-dasharray="1.6 0.5"/><line x1="449.68" y1="352.5" x2="449.68" y2="399.7" stroke="#9c9c9c" stroke-width="1.4"/><line x1="449.68" y1="399.7" x2="449.68" y2="436.3" stroke="#c2c2c2" stroke-width="1.4"/><line x1="449.68" y1="436.3" x2="449.68" y2="483" stroke="#dadada" stroke-width="1.4"/><line x1="497.11" y1="352.5" x2="497.11" y2="399.7" stroke="#9c9c9c" stroke-width="1.4"/><line x1="497.11" y1="399.7" x2="497.11" y2="436.3" stroke="#c2c2c2" stroke-width="1.4"/><line x1="497.11" y1="436.3" x2="497.11" y2="483" stroke="#dadada" stroke-width="1.4"/><line x1="544.54" y1="318" x2="544.54" y2="483" stroke="#7a7a7a" stroke-width="1.1" stroke-dasharray="1.6 0.5"/><line x1="591.97" y1="352.5" x2="591.97" y2="399.7" stroke="#9a9a9a" stroke-width="1.1" stroke-dasharray="1.6 0.5"/><line x1="591.97" y1="399.7" x2="591.97" y2="483" stroke="#b0b0b0" stroke-width="1.1" stroke-dasharray="1.6 0.5"/><line x1="639.4" y1="352.5" x2="639.4" y2="399.7" stroke="#9a9a9a" stroke-width="1.1" stroke-dasharray="1.6 0.5"/><line x1="639.4" y1="399.7" x2="639.4" y2="483" stroke="#b0b0b0" stroke-width="1.1" stroke-dasharray="1.6 0.5"/><line x1="686.8299999999999" y1="318" x2="686.8299999999999" y2="399.7" stroke="#555" stroke-width="1.1"/><line x1="686.8299999999999" y1="399.7" x2="686.8299999999999" y2="483" stroke="#6a6a6a" stroke-width="1.1" stroke-dasharray="2 0.4"/><line x1="734.26" y1="352.5" x2="734.26" y2="399.7" stroke="#9a9a9a" stroke-width="1.1" stroke-dasharray="1.6 0.5"/><line x1="734.26" y1="399.7" x2="734.26" y2="483" stroke="#b0b0b0" stroke-width="1.1" stroke-dasharray="1.6 0.5"/><line x1="781.69" y1="352.5" x2="781.69" y2="399.7" stroke="#9a9a9a" stroke-width="1.1" stroke-dasharray="1.6 0.5"/><line x1="781.69" y1="399.7" x2="781.69" y2="483" stroke="#b0b0b0" stroke-width="1.1" stroke-dasharray="1.6 0.5"/><line x1="829.12" y1="318" x2="829.12" y2="399.7" stroke="#555" stroke-width="1.1"/><line x1="829.12" y1="399.7" x2="829.12" y2="483" stroke="#6a6a6a" stroke-width="1.1" stroke-dasharray="2 0.4"/><line x1="876.55" y1="352.5" x2="876.55" y2="399.7" stroke="#9a9a9a" stroke-width="1.1" stroke-dasharray="1.6 0.5"/><line x1="876.55" y1="399.7" x2="876.55" y2="483" stroke="#b0b0b0" stroke-width="1.1" stroke-dasharray="1.6 0.5"/><line x1="923.98" y1="352.5" x2="923.98" y2="399.7" stroke="#9a9a9a" stroke-width="1.1" stroke-dasharray="1.6 0.5"/><line x1="923.98" y1="399.7" x2="923.98" y2="483" stroke="#b0b0b0" stroke-width="1.1" stroke-dasharray="1.6 0.5"/><line x1="971.41" y1="318" x2="971.41" y2="399.7" stroke="#555" stroke-width="1.1"/><line x1="971.41" y1="399.7" x2="971.41" y2="483" stroke="#6a6a6a" stroke-width="1.1" stroke-dasharray="2 0.4"/><line x1="402.3" y1="318.2" x2="971.6" y2="318.2" stroke="#8a8a8a" stroke-width="1" stroke-dasharray="1.6 0.5"/><line x1="687" y1="318" x2="971.6" y2="318" stroke="#4a4a4a" stroke-width="1.2"/><line x1="402.3" y1="352.6" x2="971.6" y2="352.6" stroke="#8c8c8c" stroke-width="1.1" stroke-dasharray="1.6 0.5"/><line x1="247" y1="436.3" x2="971.6" y2="436.3" stroke="#cfcfcf" stroke-width="1" stroke-dasharray="1.6 0.8"/><line x1="247" y1="472.8" x2="971.6" y2="472.8" stroke="#d6d6d6" stroke-width="1" stroke-dasharray="2 0.6"/><line x1="247.3" y1="436.3" x2="247.3" y2="472.5" stroke="#666" stroke-width="1"/><line x1="325.3" y1="436.3" x2="325.3" y2="483" stroke="#8a8a8a" stroke-width="1.1" stroke-dasharray="1.6 0.5"/><line x1="247.3" y1="473" x2="247.3" y2="483" stroke="#8a8a8a" stroke-width="1.1" stroke-dasharray="1.6 0.5"/><line x1="19" y1="482.5" x2="995" y2="482.5" stroke="#000" stroke-width="1" stroke-opacity="0.14"/></svg>
</body></html>
